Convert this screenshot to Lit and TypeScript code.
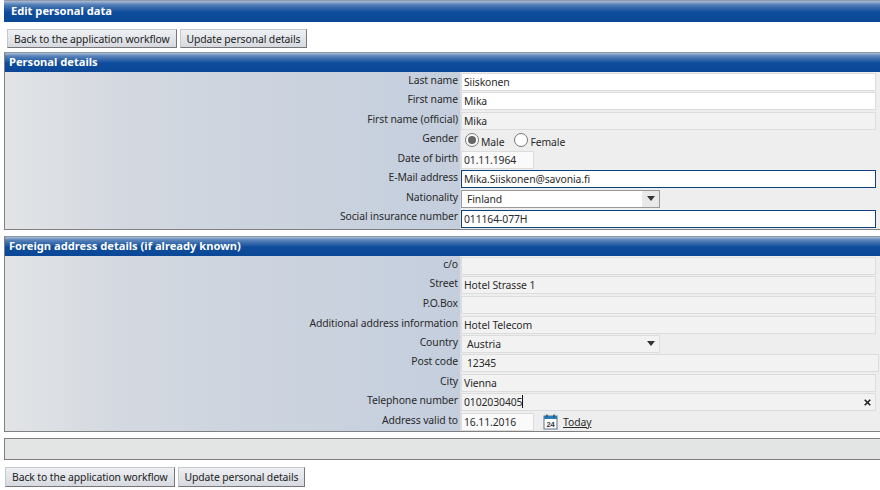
import { LitElement, html, css, svg } from "lit";
import { customElement } from "lit/decorators.js";

type Row = { label: string; h: number; kind: string; value?: string };

const personal: Row[] = [
  { label: "Last name", h: 19, kind: "white", value: "Siiskonen" },
  { label: "First name", h: 20, kind: "white", value: "Mika" },
  { label: "First name (official)", h: 19, kind: "grey", value: "Mika" },
  { label: "Gender", h: 20, kind: "gender" },
  { label: "Date of birth", h: 19, kind: "date", value: "01.11.1964" },
  { label: "E-Mail address", h: 20, kind: "focus", value: "Mika.Siiskonen@savonia.fi" },
  { label: "Nationality", h: 19, kind: "select", value: "Finland" },
  { label: "Social insurance number", h: 21, kind: "focus", value: "011164-077H" },
];
const foreign: Row[] = [
  { label: "c/o", h: 19, kind: "grey", value: "" },
  { label: "Street", h: 20, kind: "grey", value: "Hotel Strasse 1" },
  { label: "P.O.Box", h: 20, kind: "grey", value: "" },
  { label: "Additional address information", h: 19, kind: "grey", value: "Hotel Telecom" },
  { label: "Country", h: 19, kind: "select2", value: "Austria" },
  { label: "Post code", h: 20, kind: "post", value: "12345" },
  { label: "City", h: 19, kind: "grey", value: "Vienna" },
  { label: "Telephone number", h: 20, kind: "phone", value: "0102030405" },
  { label: "Address valid to", h: 19, kind: "valid", value: "16.11.2016" },
];

const calendar = svg`<svg class="cal" width="15" height="16" viewBox="0 0 15 16">
  <rect x="1" y="2" width="13" height="13" fill="#fff" stroke="#5a7288"/>
  <rect x="1" y="2" width="13" height="3" fill="#2b7fb8"/>
  <path d="M4 0.5v3M11 0.5v3" stroke="#1d4f78" stroke-width="1.4"/>
  <text x="7.5" y="13" text-anchor="middle" font-family="Liberation Sans" font-weight="700" font-size="7.5" fill="#333">24</text>
</svg>`;

const cross = svg`<svg class="x" width="7" height="7" viewBox="0 0 7 7"><path d="M0.7 0.7L6.3 6.3M6.3 0.7L0.7 6.3" stroke="#222" stroke-width="1.6"/></svg>`;

@customElement("app-root")
export class AppRoot extends LitElement {
  static styles = css`
    :host { display: block; width: 880px; height: 490px; overflow: hidden; background: #fff;
      font-family: "Noto Sans", Tahoma, sans-serif; font-size: 10.4px; letter-spacing: -0.1px; color: #2a2a2a; }
    .title { margin-left: 4px; height: 22px; box-sizing: border-box; padding: 2px 0 0 7px;
      border-top: 1px solid #8d99a8; color: #fff; font-weight: 700; line-height: 15px; font-size: 11.15px; letter-spacing: 0;
      background: linear-gradient(#a9bcd6 0, #4f7bb4 4px, #0f4c9c 11px, #0a4795 100%); }
    .buttons { display: flex; gap: 3px; padding: 7px 0 0 7px; height: 22px; }
    .buttons.bottom { padding: 7px 0 0 5px; }
    .btn { box-sizing: border-box; height: 19px; padding: 0 6px; line-height: 18px; white-space: nowrap;
      background: linear-gradient(#eef0f3, #d6dae0); border: 1px solid #c4c8ce;
      border-right-color: #777; border-bottom-color: #777; color: #222; }
    .bottom .btn { height: 20px; line-height: 18px; }
    .panel { margin-left: 4px; border: 1px solid #808080; border-right: 0; border-top-color: #8d99a8;
      background: #eee; }
    .p1 { margin-top: 1px; }
    .p2 { margin-top: 6px; }
    .head { height: 19px; padding-left: 4px; box-sizing: border-box; line-height: 18px; color: #fff; font-weight: 700;
      font-size: 11.15px; letter-spacing: 0;
      background: linear-gradient(#a9bcd6 0, #5a84ba 3px, #0f4c9c 10px, #0a4795 100%); }
    .rows { display: grid; grid-template-columns: 456px 1fr; padding-bottom: 0;
      background: linear-gradient(90deg, #e2e4e6 0, #d3d8e0 120px, #c4cedd 455px, #eee 456px); }
    .row { display: contents; }
    .lab { text-align: right; padding-right: 3px; line-height: 17px; white-space: nowrap; }
    .val { display: flex; align-items: center; min-width: 0; }
    .f { box-sizing: border-box; height: 18px; width: 415px; padding-left: 2px; line-height: 17px;
      border: 1px solid #dcdcdc; white-space: nowrap; position: relative; }
    .white { background: #fff; }
    .grey { background: #f2f2f2; }
    .date { background: #fafafa; width: 73px; }
    .focus { background: #fff; border-color: #0e3f7e; }
    .post { background: #f2f2f2; width: 418px; padding-left: 5px; }
    .sel { width: 199px; padding-left: 5px; border-color: #999; background: #fff; }
    .sel2 { background: #f2f2f2; border-color: #dcdcdc; }
    .arrow { position: absolute; right: 0; top: 0; bottom: 0; width: 17px; background: #e9e9e9;
      display: flex; align-items: center; justify-content: center; }
    .arrow::after { content: ""; border: 4px solid transparent; border-top: 5px solid #333; border-bottom: 0; }
    .sel2 .arrow { background: none; }
    .caret { display: inline-block; width: 1px; height: 13px; background: #111; vertical-align: -2px; }
    .x { position: absolute; right: 4px; top: 5px; }
    .gender { display: flex; align-items: center; padding-left: 4px; height: 19px; }
    .radio { box-sizing: border-box; width: 14px; height: 14px; border-radius: 50%; border: 1px solid #777;
      background: #fff; display: flex; align-items: center; justify-content: center; margin-right: 2px; flex: none; }
    .radio.on::after { content: ""; width: 8px; height: 8px; border-radius: 50%; background: #666; }
    .glab { margin-right: 10px; padding-top: 3px; }
    .cal { margin: 0 5px 0 9px; }
    .today { text-decoration: underline; }
    .empty { margin: 6px 0 0 4px; height: 20px; border: 1px solid #808080; border-right: 0; background: #e3e5e5; }
  `;

  field(r: Row) {
    switch (r.kind) {
      case "gender":
        return html`<div class="gender">
          <span class="radio on"></span><span class="glab">Male</span>
          <span class="radio"></span><span class="glab">Female</span>
        </div>`;
      case "date":
        return html`<div class="f date">${r.value}</div>`;
      case "select":
        return html`<div class="f sel">${r.value}<span class="arrow"></span></div>`;
      case "select2":
        return html`<div class="f sel sel2">${r.value}<span class="arrow"></span></div>`;
      case "phone":
        return html`<div class="f grey">${r.value}<span class="caret"></span>${cross}</div>`;
      case "valid":
        return html`<div class="f date">${r.value}</div>${calendar}<span class="today">Today</span>`;
      default:
        return html`<div class="f ${r.kind}">${r.value}</div>`;
    }
  }

  rows(list: Row[]) {
    return html`<div class="rows" style="grid-template-rows:${list.map((r) => r.h + "px").join(" ")}">
      ${list.map(
        (r) => html`<div class="row"><div class="lab">${r.label}</div><div class="val">${this.field(r)}</div></div>`
      )}
    </div>`;
  }

  buttons(extra = "") {
    return html`<div class="buttons ${extra}">
      <div class="btn">Back to the application workflow</div>
      <div class="btn">Update personal details</div>
    </div>`;
  }

  render() {
    return html`
      <div class="title">Edit personal data</div>
      ${this.buttons()}
      <div class="panel p1"><div class="head">Personal details</div>${this.rows(personal)}</div>
      <div class="panel p2"><div class="head">Foreign address details (if already known)</div>${this.rows(foreign)}</div>
      <div class="empty"></div>
      ${this.buttons("bottom")}
    `;
  }
}
